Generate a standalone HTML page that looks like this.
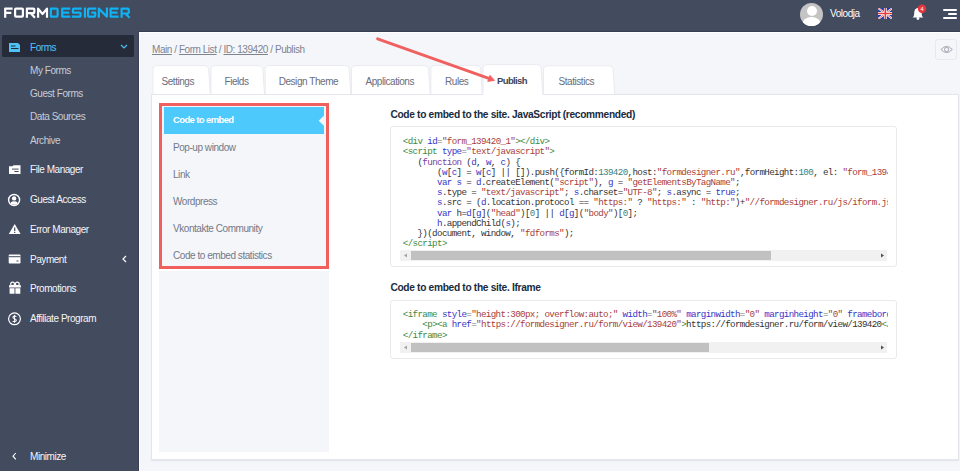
<!DOCTYPE html>
<html><head><meta charset="utf-8">
<style>
*{margin:0;padding:0;box-sizing:border-box}
html,body{width:960px;height:471px;overflow:hidden;background:#f5f6fa;font-family:"Liberation Sans",sans-serif}
.a{position:absolute}
.t{position:absolute;white-space:nowrap;line-height:1;font-size:10px;letter-spacing:-0.45px}
.sm{color:#c9ccd4;left:30px}
.si{color:#f4f5f7;left:30px}
.code{position:absolute;font-family:"Liberation Mono",monospace;font-size:9.2px;letter-spacing:-0.63px;line-height:10.2px;white-space:pre;color:#333}
.tg{color:#3f8a3f}.at{color:#3535c8}.st{color:#a8403a}.kw{color:#3535c8}.fn{color:#7a3d9c}.nm{color:#3a8080}.op{color:#777}
.tab{position:absolute;top:65px;height:30px;background:#fff;border:1px solid #e6e8ee;border-bottom:none;border-radius:5px 6px 0 0}
.mi{color:#727989}
.sb{position:absolute;height:11px;background:#f1f1f1}
.sb .th{position:absolute;top:1px;height:9px;background:#c1c1c1}
</style></head><body>
<!-- header -->
<div class="a" style="left:0;top:0;width:960px;height:32px;background:#434b5f"></div>
<div class="a" style="left:139px;top:30.5px;width:821px;height:1px;background:#383e50"></div>
<!-- logo -->
<svg class="a" style="left:0;top:0" width="140" height="30" viewBox="0 0 140 30">
 <g fill="none" stroke="#fff" stroke-width="2.2" stroke-linejoin="round">
  <path d="M12.6 8.6 H5.2 V17.7 M5.2 12.8 H11.3"/>
  <path d="M16 8.6 H22 Q22.9 8.6 22.9 9.5 V15.7 Q22.9 16.6 22 16.6 H16 Q15.1 16.6 15.1 15.7 V9.5 Q15.1 8.6 16 8.6 Z"/>
  <path d="M26.9 17.7 V8.6 H33.4 Q34.3 8.6 34.3 9.5 V12.3 Q34.3 13.2 33.4 13.2 H26.9 M30.8 13.2 L34.9 17.7"/>
  <path d="M38.1 17.7 V8.6 L42.55 14 L47 8.6 V17.7"/>
 </g>
 <g fill="none" stroke="#0fb2f2" stroke-width="2.2" stroke-linejoin="round">
  <path d="M50.85 8.6 H56.5 Q57.6 8.6 57.6 9.7 V15.5 Q57.6 16.6 56.5 16.6 H50.85 Z"/>
  <path d="M70.3 8.6 H62.2 V16.6 H70.3 M62.2 12.6 H69.3"/>
  <path d="M81.7 8.6 H73.8 Q72.9 8.6 72.9 9.5 V12.6 H79.8 Q80.6 12.6 80.6 13.4 V15.7 Q80.6 16.6 79.7 16.6 H71.8"/>
  <path d="M84.95 7.5 V17.7"/>
  <path d="M96.3 8.6 H89 Q88.1 8.6 88.1 9.5 V15.7 Q88.1 16.6 89 16.6 H94.3 Q95.2 16.6 95.2 15.7 V12.6 H91.3"/>
  <path d="M98.8 17.7 V8.6 L106.9 16.6 V7.5"/>
  <path d="M118.6 8.6 H110.6 V16.6 H118.6 M110.6 12.6 H117.6"/>
  <path d="M121.6 17.7 V8.6 H127.8 Q128.7 8.6 128.7 9.5 V12.6 Q128.7 13.5 127.8 13.5 H121.6 M125.3 13.5 L129.6 17.7"/>
 </g>
</svg>
<!-- header right -->
<div class="a" style="left:800px;top:3px;width:23px;height:23px;border-radius:50%;background:#c4c4c4;overflow:hidden">
  <div class="a" style="left:6.5px;top:3px;width:10px;height:10px;border-radius:50%;background:#fff"></div>
  <div class="a" style="left:2px;top:14px;width:19px;height:16px;border-radius:50%;background:#fff"></div>
</div>
<div class="t" style="left:830px;top:9.25px;color:#fff">Volodja</div>
<svg class="a" style="left:877.8px;top:7.8px" width="14.7" height="11.1" viewBox="0 0 60 44" preserveAspectRatio="none">
 <rect width="60" height="44" fill="#1d3aa8"/>
 <path d="M0 0 L60 44 M60 0 L0 44" stroke="#fff" stroke-width="8"/>
 <path d="M0 0 L60 44 M60 0 L0 44" stroke="#e53a3a" stroke-width="3"/>
 <path d="M30 0 V44 M0 22 H60" stroke="#fff" stroke-width="12"/>
 <path d="M30 0 V44 M0 22 H60" stroke="#e53a3a" stroke-width="6.5"/>
</svg>
<svg class="a" style="left:910px;top:4px" width="20" height="18" viewBox="0 0 20 18">
 <path d="M2.6 13.6 H13.3 C12 12.5 11.7 11 11.7 9 C11.7 6.2 10.6 4.3 7.95 3.7 C5.3 4.3 4.2 6.2 4.2 9 C4.2 11 3.9 12.5 2.6 13.6 Z" fill="#fff"/>
 <circle cx="7.95" cy="14.5" r="1.4" fill="#fff"/>
 <circle cx="12" cy="4.8" r="4.2" fill="#e8343a"/>
 <text x="12" y="6.8" font-size="5.5" fill="#fff" text-anchor="middle" font-family="Liberation Sans">4</text>
</svg>
<div class="a" style="left:943.2px;top:8.9px;width:13.8px;height:1.9px;background:#fff;border-radius:1px"></div>
<div class="a" style="left:947.8px;top:12.9px;width:9.2px;height:1.9px;background:#fff;border-radius:1px"></div>
<div class="a" style="left:943.2px;top:17.1px;width:13.8px;height:1.9px;background:#fff;border-radius:1px"></div>

<!-- sidebar -->
<div class="a" style="left:0;top:31px;width:139px;height:440px;background:#434b5f;border-right:1px solid #3b4256"></div>
<div class="a" style="left:1.5px;top:35.2px;width:132.3px;height:22.3px;background:#262b3a;border-radius:1.5px"></div>
<svg class="a" style="left:8px;top:42px" width="13" height="11" viewBox="0 0 13 11">
 <path d="M1 1 H10 L12 3 V10 H1 Z" fill="#4fc3f7"/>
 <rect x="3" y="3.5" width="4.5" height="1" fill="#262b3a"/>
 <rect x="3" y="6" width="7.5" height="1" fill="#262b3a"/>
</svg>
<div class="t" style="left:30px;top:42.55px;color:#4fc3f7">Forms</div>
<svg class="a" style="left:119px;top:43px" width="10" height="7" viewBox="0 0 10 7"><path d="M2 2 L5 4.9 L8 2" fill="none" stroke="#4fc3f7" stroke-width="1.15"/></svg>
<div class="t sm" style="top:65.75px">My Forms</div>
<div class="t sm" style="top:89.00px">Guest Forms</div>
<div class="t sm" style="top:112.35px">Data Sources</div>
<div class="t sm" style="top:135.70px">Archive</div>

<svg class="a" style="left:8px;top:164px" width="13" height="11" viewBox="0 0 13 11">
 <path d="M1 2.2 H4.5 L5.5 1.2 H12.5 V10 H1 Z" fill="#fff"/>
 <rect x="4" y="4.6" width="6.6" height="1" fill="#434b5f"/>
 <rect x="6.4" y="7" width="4.2" height="1" fill="#434b5f"/>
</svg>
<div class="t si" style="top:165.40px">File Manager</div>
<svg class="a" style="left:7px;top:192.5px" width="15" height="14" viewBox="0 0 15 14">
 <defs><clipPath id="gc"><circle cx="7.1" cy="7" r="4.8"/></clipPath></defs>
 <circle cx="7.1" cy="7" r="5.5" fill="none" stroke="#fff" stroke-width="1.4"/>
 <circle cx="7.1" cy="5.4" r="2.2" fill="#fff"/>
 <ellipse cx="7.1" cy="11.6" rx="4" ry="3.4" fill="#fff" clip-path="url(#gc)"/>
</svg>
<div class="t si" style="top:195.15px">Guest Access</div>
<svg class="a" style="left:8px;top:223px" width="14" height="12" viewBox="0 0 14 12">
 <path d="M6.7 1 L12.6 11 H0.8 Z" fill="#fff"/>
 <rect x="6.1" y="4.5" width="1.2" height="3.5" fill="#434b5f"/>
 <rect x="6.1" y="8.8" width="1.2" height="1.2" fill="#434b5f"/>
</svg>
<div class="t si" style="top:224.85px">Error Manager</div>
<svg class="a" style="left:8px;top:254px" width="13" height="10" viewBox="0 0 13 10">
 <rect x="0.7" y="0.6" width="11.8" height="9" rx="1" fill="#fff"/>
 <rect x="0.7" y="2.2" width="11.8" height="1" fill="#434b5f"/>
 <rect x="8.5" y="6.5" width="2" height="1" fill="#434b5f"/>
</svg>
<div class="t si" style="top:254.50px">Payment</div>
<svg class="a" style="left:121px;top:255px" width="7" height="8" viewBox="0 0 7 8"><path d="M5 1 L2 4 L5 7" fill="none" stroke="#fff" stroke-width="1.2"/></svg>
<svg class="a" style="left:8px;top:281px" width="14" height="14" viewBox="0 0 14 14">
 <path d="M1 4.2 H12.9 V6.6 H1 Z M1.6 7.3 H6.5 V12.8 H1.6 Z M7.4 7.3 H12.3 V12.8 H7.4 Z" fill="#fff"/>
 <circle cx="4.6" cy="3" r="1.9" fill="none" stroke="#fff" stroke-width="1.2"/>
 <circle cx="9.3" cy="3" r="1.9" fill="none" stroke="#fff" stroke-width="1.2"/>
</svg>
<div class="t si" style="top:283.80px">Promotions</div>
<svg class="a" style="left:7px;top:311px" width="15" height="15" viewBox="0 0 15 15">
 <circle cx="7.5" cy="7.8" r="5.9" fill="none" stroke="#fff" stroke-width="1.2"/>
 <path d="M9.3 5.6 C8.8 4.9 6 4.6 5.9 6.3 C5.8 7.9 9.4 7.5 9.3 9.3 C9.2 11 6.2 10.8 5.6 10" fill="none" stroke="#fff" stroke-width="1.1"/>
 <path d="M7.5 3.8 V11.8" stroke="#fff" stroke-width="0.9"/>
</svg>
<div class="t si" style="top:313.80px">Affiliate Program</div>
<svg class="a" style="left:11px;top:451.6px" width="7" height="9" viewBox="0 0 7 9"><path d="M4.8 1 L2 4.2 L4.8 7.4" fill="none" stroke="#fff" stroke-width="1.1"/></svg>
<div class="t si" style="top:452.30px">Minimize</div>

<!-- main -->
<div class="a" style="left:139px;top:31.5px;width:821px;height:440px;background:#f5f6fa;border-left:1.5px solid #fff;border-top:1.5px solid #fff"></div>
<div class="t" style="left:152px;top:44.83px;color:#7f8490"><u>Main</u> / <u>Form List</u> / <u>ID: 139420</u> / Publish</div>
<div class="a" style="left:934.8px;top:39.3px;width:22.7px;height:21.1px;border:1px solid #e8e9ee;border-radius:3px;background:#f5f6fa"></div>
<svg class="a" style="left:0;top:0" width="960" height="70">
 <path d="M940.9 49.5 Q946.6 43.4 952.3 49.5 Q946.6 55.6 940.9 49.5 Z" fill="none" stroke="#a3a7b1" stroke-width="1"/>
 <circle cx="946.6" cy="49.5" r="2.1" fill="none" stroke="#a3a7b1" stroke-width="1"/>
</svg>

<!-- panel -->
<div class="a" style="left:151px;top:94px;width:807.5px;height:365.5px;background:#fff;border:1px solid #e5e6eb;box-shadow:0 1px 1px #e5e6eb,-0.5px 0 1px #e5e6eb"></div>
<!-- tabs -->
<svg class="a" style="left:0;top:0" width="640" height="100">
 <path d="M152.9,94 V69.6 Q152.9,65.6 157.4,65.6 H204.0 Q208.5,65.6 208.7,69.6 L210.3,94" fill="#fff" stroke="#e9ebf0" stroke-width="1"/>
 <path d="M211.0,94 V69.6 Q211.0,65.6 215.5,65.6 H258.2 Q262.7,65.6 262.9,69.6 L264.5,94" fill="#fff" stroke="#e9ebf0" stroke-width="1"/>
 <path d="M265.2,94 V69.5 Q265.2,65.5 269.7,65.5 H344.5 Q349.0,65.5 349.2,69.5 L350.8,94" fill="#fff" stroke="#e9ebf0" stroke-width="1"/>
 <path d="M351.5,94 V69.6 Q351.5,65.6 356.0,65.6 H423.9 Q428.4,65.6 428.6,69.6 L430.2,94" fill="#fff" stroke="#e9ebf0" stroke-width="1"/>
 <path d="M430.9,94 V69.4 Q430.9,65.4 435.4,65.4 H476.0 Q480.5,65.4 480.7,69.4 L482.3,94" fill="#fff" stroke="#e9ebf0" stroke-width="1"/>
 <path d="M543.5,94 V69.8 Q543.5,65.8 548.0,65.8 H608.5 Q613.0,65.8 613.2,69.8 L614.8,94" fill="#fff" stroke="#e9ebf0" stroke-width="1"/>
 <path d="M483.0,95 V68.6 Q483.0,64.6 487.5,64.6 H536.5 Q541.0,64.6 541.2,68.6 L542.8,95" fill="#fff" stroke="#e9ebf0" stroke-width="1"/>
 <rect x="483.5" y="92" width="58.8" height="4" fill="#fff"/>
</svg>
<div class="t" style="left:161.5px;top:76.70px;color:#676e7e">Settings</div>
<div class="t" style="left:224.5px;top:76.70px;color:#676e7e">Fields</div>
<div class="t" style="left:278.7px;top:76.70px;color:#676e7e">Design Theme</div>
<div class="t" style="left:365.5px;top:76.70px;color:#676e7e">Applications</div>
<div class="t" style="left:445px;top:76.70px;color:#676e7e">Rules</div>
<div class="t" style="left:497px;top:76.00px;color:#3f4556;font-weight:bold;font-size:9.5px;letter-spacing:-0.62px">Publish</div>
<div class="t" style="left:558.5px;top:76.70px;color:#676e7e">Statistics</div>

<!-- left menu -->
<div class="a" style="left:159px;top:103px;width:170px;height:349px;background:#f5f6fa"></div>
<div class="a" style="left:164px;top:107px;width:160px;height:27px;background:#4ec9fb"></div>
<svg class="a" style="left:0;top:0" width="340" height="140"><path d="M324.2 115.4 L318.7 120.8 L324.2 126 Z" fill="#f5f6fa"/></svg>
<div class="t" style="left:173px;top:114.9px;color:#fff;font-weight:bold;font-size:9.5px;letter-spacing:-0.62px">Code to embed</div>
<div class="t mi" style="left:173px;top:142.55px">Pop-up window</div>
<div class="t mi" style="left:173px;top:169.65px">Link</div>
<div class="t mi" style="left:173px;top:196.75px">Wordpress</div>
<div class="t mi" style="left:173px;top:223.95px">Vkontakte Community</div>
<div class="t mi" style="left:173px;top:251.05px">Code to embed statistics</div>
<div class="a" style="left:159px;top:103px;width:170px;height:166px;border:3px solid #f0605f"></div>
<div class="a" style="left:159px;top:269px;width:170px;height:2px;background:#fff"></div>

<!-- content -->
<div class="t" style="left:390.4px;top:109.5px;color:#182b40;font-weight:bold;font-size:10.2px;letter-spacing:-0.32px">Code to embed to the site. JavaScript (recommended)</div>
<div class="a" style="left:390.4px;top:126.4px;width:507px;height:141px;border:1px solid #e8eaee;border-radius:3px;background:#fff"></div>
<div class="a" style="left:403px;top:130px;width:485px;height:120px;overflow:hidden">
<div class="code" style="left:-0.2px;top:7.2px"><span class="tg">&lt;div</span> <span class="at">id</span><span class="op">=</span><span class="st">"form_139420_1"</span><span class="tg">&gt;&lt;/div&gt;</span>
<span class="tg">&lt;script</span> <span class="at">type</span><span class="op">=</span><span class="st">"text/javascript"</span><span class="tg">&gt;</span>
   (<span class="fn">function</span> (<span class="kw">d</span>, <span class="kw">w</span>, <span class="kw">c</span>) {
       (<span class="kw">w</span>[<span class="kw">c</span>] = <span class="kw">w</span>[<span class="kw">c</span>] || []).push({formId:<span class="nm">139420</span>,host:<span class="st">"formdesigner.ru"</span>,formHeight:<span class="nm">100</span>, el: <span class="st">"form_139420_1"</span>});
       <span class="kw">var</span> <span class="kw">s</span> = <span class="kw">d</span>.createElement(<span class="st">"script"</span>), <span class="kw">g</span> = <span class="st">"getElementsByTagName"</span>;
       <span class="kw">s</span>.type = <span class="st">"text/javascript"</span>; <span class="kw">s</span>.charset=<span class="st">"UTF-8"</span>; <span class="kw">s</span>.async = <span class="kw">true</span>;
       <span class="kw">s</span>.src = (<span class="kw">d</span>.location.protocol == <span class="st">"https:"</span> ? <span class="st">"https:"</span> : <span class="st">"http:"</span>)+<span class="st">"//formdesigner.ru/js/iform.js"</span>;
       <span class="kw">var</span> h=<span class="kw">d</span>[<span class="kw">g</span>](<span class="st">"head"</span>)[<span class="nm">0</span>] || <span class="kw">d</span>[<span class="kw">g</span>](<span class="st">"body"</span>)[<span class="nm">0</span>];
       <span class="kw">h</span>.appendChild(<span class="kw">s</span>);
   })(document, window, <span class="st">"fdforms"</span>);
<span class="tg">&lt;/script&gt;</span></div>
</div>
<div class="sb" style="left:400px;top:250px;width:487px">
 <div class="th" style="left:11px;width:360px"></div>
 <svg class="a" style="left:3px;top:3px" width="5" height="5" viewBox="0 0 5 5"><path d="M4 0.5 L1 2.5 L4 4.5 Z" fill="#a3a3a3"/></svg>
 <svg class="a" style="left:480px;top:3px" width="5" height="5" viewBox="0 0 5 5"><path d="M1 0.5 L4 2.5 L1 4.5 Z" fill="#505050"/></svg>
</div>

<div class="t" style="left:390.4px;top:282.7px;color:#182b40;font-weight:bold;font-size:10.2px;letter-spacing:-0.32px">Code to embed to the site. Iframe</div>
<div class="a" style="left:390.4px;top:299.5px;width:507px;height:59.6px;border:1px solid #e8eaee;border-radius:3px;background:#fff"></div>
<div class="a" style="left:403px;top:303px;width:485px;height:38px;overflow:hidden">
<div class="code" style="left:-0.2px;top:7.2px"><span class="tg">&lt;iframe</span> <span class="at">style</span><span class="op">=</span><span class="st">"height:300px; overflow:auto;"</span> <span class="at">width</span><span class="op">=</span><span class="st">"100%"</span> <span class="at">marginwidth</span><span class="op">=</span><span class="st">"0"</span> <span class="at">marginheight</span><span class="op">=</span><span class="st">"0"</span> <span class="at">frameborder</span><span class="op">=</span><span class="st">"0"</span><span class="tg">&gt;</span>
    <span class="tg">&lt;p&gt;&lt;a</span> <span class="at">href</span><span class="op">=</span><span class="st">"https://formdesigner.ru/form/view/139420"</span><span class="tg">&gt;</span>https://formdesigner.ru/form/view/139420<span class="tg">&lt;/a&gt;&lt;/p&gt;</span>
<span class="tg">&lt;/iframe&gt;</span></div>
</div>
<div class="sb" style="left:400px;top:342px;width:487px">
 <div class="th" style="left:11px;width:298px"></div>
 <svg class="a" style="left:3px;top:3px" width="5" height="5" viewBox="0 0 5 5"><path d="M4 0.5 L1 2.5 L4 4.5 Z" fill="#a3a3a3"/></svg>
 <svg class="a" style="left:480px;top:3px" width="5" height="5" viewBox="0 0 5 5"><path d="M1 0.5 L4 2.5 L1 4.5 Z" fill="#505050"/></svg>
</div>

<!-- arrow -->
<svg class="a" style="left:0;top:0" width="960" height="471" viewBox="0 0 960 471">
 <path d="M377.6 38.8 L489.5 78.6" stroke="#f0605f" stroke-width="2.9" stroke-linecap="round"/>
 <path d="M494.6 80.4 L487.7 81.4 L489.9 75.3 Z" fill="#f0605f" stroke="#f0605f" stroke-width="0.8" stroke-linejoin="round"/>
</svg>
</body></html>
